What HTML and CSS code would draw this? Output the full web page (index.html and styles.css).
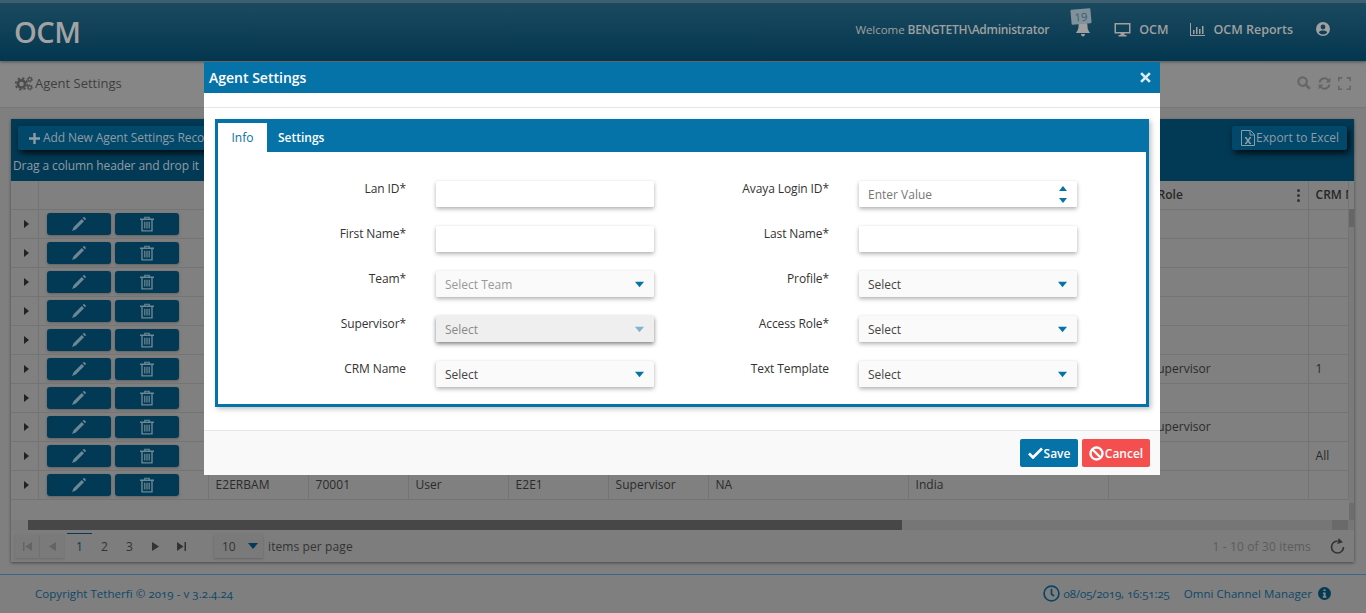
FILE: index.html
```html
<!DOCTYPE html>
<html lang="en">

<head>
  <meta charset="UTF-8">
  <title>OCM - Agent Settings</title>
  <link rel="stylesheet" href="styles.css">
</head>

<body>
  <svg class="sprite" aria-hidden="true">
    <symbol id="i-pencil" viewBox="0 0 16 16">
      <path d="M10.8 3 13 5.2 4.800 13.400 1 15 2.600 11.200ZM11.700 2.100 13 .8 15.200 3 13.900 4.300Z" fill="currentColor" />
    </symbol>
    <symbol id="i-trash" viewBox="0 0 16 16">
      <path d="M5.2 2.600V.8h5.600v1.800H15v1.500h-1.300V15.600H2.300V4.100H1V2.600ZM6.500 2.600h3V1.800h-3ZM3.700 4.100v10.100h8.600V4.100ZM5.200 5.800h1.200v6.800H5.200ZM7.400 5.800h1.200v6.800H7.400ZM9.600 5.800h1.200v6.800H9.600Z" fill-rule="evenodd" fill="currentColor" />
    </symbol>
    <symbol id="i-caret" viewBox="0 0 10 10">
      <path d="M0 2h10L5 8Z" fill="currentColor" />
    </symbol>
  </svg>

  <div id="app">
    <div id="site-header">
      <div class="logo">OCM</div>
      <div class="header-links">
        <span class="welcome">Welcome <b>BENGTETH\Administrator</b></span>
        <span class="bell">
          <svg width="14" height="16" viewBox="0 0 14 16"><path d="M7 0C4 0 2.500 2 2.500 5c0 4-1.500 5-2.500 7h14c-1-2-2.500-3-2.500-7C11.500 2 10 0 7 0ZM5 13h4c0 1.500-1 2.500-2 2.500S5 14.500 5 13Z" fill="#a0a0a0" /></svg>
          <span class="bell-count">19</span>
        </span>
        <span class="header-link">
          <svg width="17" height="15" viewBox="0 0 16 15"><path d="M0 1h16v10.500H10V13h2v1.500H4V13h2v-1.500H0ZM1.500 2.500V10h13V2.500Z" fill-rule="evenodd" fill="#a0a0a0" /></svg>
          OCM
        </span>
        <span class="header-link">
          <svg width="15" height="13" viewBox="0 0 15 13"><path d="M0 0h1v12h14v1H0ZM3 7h1.500v4H3ZM6 4h1.500v7H6ZM9 6h1.500v5H9ZM12 3h1.500v8H12Z" fill="#a0a0a0" /></svg>
          OCM Reports
        </span>
        <svg class="user-icon" width="14" height="14" viewBox="0 0 14 14"><path d="M7 0a7 7 0 1 0 0 14A7 7 0 0 0 7 0ZM7 2.600a2.400 2.400 0 1 1 0 4.800 2.400 2.400 0 0 1 0-4.800ZM2.800 10.600C3.400 9.200 4.800 8.600 7 8.600s3.600.6 4.200 2c-1 1.200-2.500 2-4.200 2s-3.200-.8-4.200-2Z" fill-rule="evenodd" fill="#a0a0a0" /></svg>
      </div>
    </div>

    <div id="page-title">
      <div class="page-name">
        <svg width="18" height="15" viewBox="0 0 18 15">
          <circle cx="6.500" cy="8" r="3.600" fill="none" stroke="#4d4d4d" stroke-width="2.600" />
          <circle cx="6.500" cy="8" r="5.800" fill="none" stroke="#4d4d4d" stroke-width="1.800" stroke-dasharray="2.300 2.250" />
          <circle cx="14.800" cy="3.400" r="1.700" fill="none" stroke="#4d4d4d" stroke-width="1.300" />
          <circle cx="14.800" cy="3.400" r="2.700" fill="none" stroke="#4d4d4d" stroke-width="1" stroke-dasharray="1.200 1.630" />
          <circle cx="14.800" cy="11.400" r="1.700" fill="none" stroke="#4d4d4d" stroke-width="1.300" />
          <circle cx="14.800" cy="11.400" r="2.700" fill="none" stroke="#4d4d4d" stroke-width="1" stroke-dasharray="1.200 1.630" />
        </svg>
        Agent Settings
      </div>
      <div class="page-tools">
        <svg width="14" height="14" viewBox="0 0 13 13"><circle cx="5.200" cy="5.200" r="3.900" fill="none" stroke="#666" stroke-width="2" /><path d="M8 8l4 4" stroke="#666" stroke-width="2.400" /></svg>
        <svg width="15" height="15" viewBox="0 0 14 14"><path d="M1.500 6a5.500 5.500 0 0 1 9.500-3l1.500-1.500V6H8l1.700-1.700A3.700 3.700 0 0 0 3.400 6ZM12.500 8A5.500 5.500 0 0 1 3 11l-1.500 1.500V8H6L4.300 9.700A3.700 3.700 0 0 0 10.600 8Z" fill="#666" /></svg>
        <svg width="13" height="13" viewBox="0 0 12 12"><path d="M0 4V0h4v1.500H1.500V4ZM8 0h4v4h-1.500V1.500H8ZM12 8v4H8v-1.500h2.500V8ZM4 12H0V8h1.500v2.500H4Z" fill="#666" /></svg>
      </div>
    </div>

    <div id="agent-grid">
      <div class="grid-toolbar">
        <div class="toolbar-row">
          <button class="tool-btn add-btn">
            <svg width="11" height="11" viewBox="0 0 11 11"><path d="M4.300 0h2.400v4.300H11v2.400H6.700V11H4.300V6.700H0V4.300h4.300Z" fill="#8f9ca3" /></svg>
            Add New Agent Settings Reco
          </button>
          <button class="tool-btn">
            <svg width="14" height="16" viewBox="0 0 14 16"><path d="M.5.5h9l4 4v11H.5ZM9 .5V5h4.500" fill="none" stroke="#8f9ca3" /><path d="M3.500 7h2L7 9.400 8.500 7h2L8 10.800 10.500 14h-2L7 11.900 5.500 14h-2L6 10.800Z" fill="#8f9ca3" /></svg>
            Export to Excel
          </button>
        </div>
        <div class="group-hint">Drag a column header and drop it</div>
      </div>

      <div class="grid-body">
        <table class="agent-table">
          <colgroup>
            <col class="col-expand">
            <col class="col-actions">
            <col class="col-md">
            <col class="col-md">
            <col class="col-md">
            <col class="col-md">
            <col class="col-md">
            <col class="col-lg">
            <col class="col-lg">
            <col class="col-lg">
            <col class="col-crm">
          </colgroup>
          <thead>
            <tr>
              <th></th>
              <th></th>
              <th></th>
              <th></th>
              <th></th>
              <th></th>
              <th></th>
              <th></th>
              <th></th>
              <th class="th-role">Access Role<span class="col-menu"><i></i><i></i><i></i></span></th>
              <th>CRM Name</th>
            </tr>
          </thead>
          <tbody>
            <tr><td class="arrow-cell"><span class="arrow"></span></td><td><div class="row-btns"><button class="row-btn"><svg><use href="#i-pencil" /></svg></button><button class="row-btn"><svg><use href="#i-trash" /></svg></button></div></td><td colspan="7"></td><td></td><td></td></tr>
            <tr><td class="arrow-cell"><span class="arrow"></span></td><td><div class="row-btns"><button class="row-btn"><svg><use href="#i-pencil" /></svg></button><button class="row-btn"><svg><use href="#i-trash" /></svg></button></div></td><td colspan="7"></td><td></td><td></td></tr>
            <tr><td class="arrow-cell"><span class="arrow"></span></td><td><div class="row-btns"><button class="row-btn"><svg><use href="#i-pencil" /></svg></button><button class="row-btn"><svg><use href="#i-trash" /></svg></button></div></td><td colspan="7"></td><td></td><td></td></tr>
            <tr><td class="arrow-cell"><span class="arrow"></span></td><td><div class="row-btns"><button class="row-btn"><svg><use href="#i-pencil" /></svg></button><button class="row-btn"><svg><use href="#i-trash" /></svg></button></div></td><td colspan="7"></td><td></td><td></td></tr>
            <tr><td class="arrow-cell"><span class="arrow"></span></td><td><div class="row-btns"><button class="row-btn"><svg><use href="#i-pencil" /></svg></button><button class="row-btn"><svg><use href="#i-trash" /></svg></button></div></td><td colspan="7"></td><td></td><td></td></tr>
            <tr><td class="arrow-cell"><span class="arrow"></span></td><td><div class="row-btns"><button class="row-btn"><svg><use href="#i-pencil" /></svg></button><button class="row-btn"><svg><use href="#i-trash" /></svg></button></div></td><td colspan="7"></td><td class="td-role">Supervisor</td><td>1</td></tr>
            <tr><td class="arrow-cell"><span class="arrow"></span></td><td><div class="row-btns"><button class="row-btn"><svg><use href="#i-pencil" /></svg></button><button class="row-btn"><svg><use href="#i-trash" /></svg></button></div></td><td colspan="7"></td><td></td><td></td></tr>
            <tr><td class="arrow-cell"><span class="arrow"></span></td><td><div class="row-btns"><button class="row-btn"><svg><use href="#i-pencil" /></svg></button><button class="row-btn"><svg><use href="#i-trash" /></svg></button></div></td><td colspan="7"></td><td class="td-role">Supervisor</td><td></td></tr>
            <tr><td class="arrow-cell"><span class="arrow"></span></td><td><div class="row-btns"><button class="row-btn"><svg><use href="#i-pencil" /></svg></button><button class="row-btn"><svg><use href="#i-trash" /></svg></button></div></td><td colspan="7"></td><td></td><td>All</td></tr>
            <tr><td class="arrow-cell"><span class="arrow"></span></td><td><div class="row-btns"><button class="row-btn"><svg><use href="#i-pencil" /></svg></button><button class="row-btn"><svg><use href="#i-trash" /></svg></button></div></td><td>E2ERBAM</td><td>70001</td><td>User</td><td>E2E1</td><td>Supervisor</td><td>NA</td><td>India</td><td></td><td></td></tr>
          </tbody>
        </table>
        <div class="v-scroll">
          <span class="v-thumb"></span>
          <span class="v-end"></span>
        </div>
      </div>

      <div class="h-scroll">
        <span class="h-start"></span>
        <span class="h-thumb"></span>
        <span class="h-rest"></span>
        <span class="h-end"></span>
      </div>

      <div class="pager">
        <span class="pager-btn faded"><svg width="9" height="9" viewBox="0 0 9 9"><path d="M0 0h1.500v9H0ZM9 0v9L2.500 4.500Z" fill="currentColor" /></svg></span>
        <span class="pager-btn faded"><svg width="7" height="9" viewBox="0 0 7 9"><path d="M7 0v9L0 4.500Z" fill="currentColor" /></svg></span>
        <span class="page-num current">1</span>
        <span class="page-num">2</span>
        <span class="page-num">3</span>
        <span class="pager-arrow"><svg width="7" height="9" viewBox="0 0 7 9"><path d="M0 0v9l7-4.500Z" fill="currentColor" /></svg></span>
        <span class="pager-arrow"><svg width="9" height="9" viewBox="0 0 9 9"><path d="M0 0v9l6.500-4.500ZM7.500 0H9v9H7.500Z" fill="currentColor" /></svg></span>
        <span class="page-size">10 <svg width="10" height="10"><use href="#i-caret" /></svg></span>
        <span class="page-size-label">items per page</span>
        <span class="page-info">1 - 10 of 30 items</span>
        <svg class="page-refresh" width="15" height="16" viewBox="0 0 15 16"><path d="M7.500 3a6 6 0 1 0 6 6" fill="none" stroke="#333" stroke-width="1.700" /><path d="M8 0l5 3.200L8 6Z" fill="#333" transform="rotate(12 8 3)" /></svg>
      </div>
    </div>

    <div id="site-footer">
      <span>Copyright Tetherfi © 2019 - v 3.2.4.24</span>
      <div class="footer-right">
        <svg width="17" height="17" viewBox="0 0 16 16"><circle cx="8" cy="8" r="7" fill="none" stroke="#0a4565" stroke-width="1.600" /><path d="M8 3.500v5l2.500 2" fill="none" stroke="#0a4565" stroke-width="1.600" /></svg>
        <span class="footer-time">08/05/2019, 16:51:25</span>
        <span class="footer-app">Omni Channel Manager</span>
        <svg width="13" height="13" viewBox="0 0 12 12"><circle cx="6" cy="6" r="6" fill="#033a56" /><path d="M5 2.200h2v1.600H5ZM4.600 5H7v3.600h.8V10H4.400V8.600h.8V6.400h-.6Z" fill="#8a8a8a" /></svg>
      </div>
    </div>
  </div>

  <div id="settings-dialog">
    <div class="dialog-title">
      <span>Agent Settings</span>
      <svg width="11" height="11" viewBox="0 0 10 10"><path d="M1 1l8 8M9 1L1 9" stroke="#dcebf3" stroke-width="2.400" /></svg>
    </div>
    <div class="dialog-gap"></div>
    <div class="dialog-body">
      <div class="tab-box">
        <div class="tab-strip">
          <span class="tab active">Info</span>
          <span class="tab">Settings</span>
        </div>
        <div class="form-grid">
          <label>Lan ID*</label>
          <div class="field"></div>
          <label>Avaya Login ID*</label>
          <div class="field placeholder">Enter Value
            <span class="spin"><i class="up"></i><i class="down"></i></span>
          </div>

          <label>First Name*</label>
          <div class="field"></div>
          <label>Last Name*</label>
          <div class="field"></div>

          <label>Team*</label>
          <div class="field select muted">Select Team <svg><use href="#i-caret" /></svg></div>
          <label>Profile*</label>
          <div class="field select">Select <svg><use href="#i-caret" /></svg></div>

          <label>Supervisor*</label>
          <div class="field select disabled">Select <svg><use href="#i-caret" /></svg></div>
          <label>Access Role*</label>
          <div class="field select">Select <svg><use href="#i-caret" /></svg></div>

          <label>CRM Name</label>
          <div class="field select">Select <svg><use href="#i-caret" /></svg></div>
          <label>Text Template</label>
          <div class="field select">Select <svg><use href="#i-caret" /></svg></div>
        </div>
      </div>
    </div>
    <div class="dialog-footer">
      <button class="btn-save">
        <svg width="15" height="12" viewBox="0 0 15 12"><path d="M1 6.500l4 4 9-9" fill="none" stroke="#fff" stroke-width="2.600" /></svg>
        Save
      </button>
      <button class="btn-cancel">
        <svg width="15" height="15" viewBox="0 0 15 15"><circle cx="7.500" cy="7.500" r="6" fill="none" stroke="#fff" stroke-width="2.400" /><path d="M3.500 3.500l8 8" stroke="#fff" stroke-width="2.400" /></svg>
        Cancel
      </button>
    </div>
  </div>
</body>

</html>
```

FILE: styles.css
```css
* {
  box-sizing: border-box;
}

html,
body {
  margin: 0;
  height: 613px;
  overflow: hidden;
}

body {
  font-family: "Open Sans", "Noto Sans", sans-serif;
  font-size: 12px;
  background-color: #7f7f7f;
  color: #2b2b2b;
}

button {
  font-family: inherit;
  border: 0;
  cursor: pointer;
}

.sprite {
  display: none;
}

#app {
  display: flex;
  flex-direction: column;
  height: 613px;
}

/* header (everything behind the dialog is painted dimmed) */
#site-header {
  height: 61px;
  flex: none;
  border-top: 3px solid #3e5f70;
  background: linear-gradient(#1b4a5f, #03364f);
  box-shadow: 0 1px 3px rgb(0 0 0 / 40%);
  display: flex;
  justify-content: space-between;
  align-items: center;
  padding: 0 36px 0 14px;
  color: #a0a0a0;
  position: relative;
}

.logo {
  font-size: 29px;
  font-weight: 600;
  letter-spacing: -0.5px;
  color: #a3a3a3;
  margin-top: -2px;
}

.header-links {
  display: flex;
  align-items: center;
  font-size: 12.5px;
  font-weight: 600;
  margin-top: -6px;
}

.welcome {
  font-weight: 400;
  font-size: 11.5px;
  letter-spacing: -0.05px;
}

.welcome b {
  font-size: 12px;
  font-weight: 600;
  letter-spacing: -0.28px;
}

.bell {
  position: relative;
  margin: 0 2px 0 27px;
  width: 14px;
  height: 16px;
  display: block;
}

.bell-count {
  position: absolute;
  left: -5px;
  top: -12px;
  width: 20px;
  height: 15px;
  background-color: #7f929b;
  color: #3c5a6c;
  font-size: 11px;
  font-weight: 400;
  line-height: 15px;
  text-align: center;
  border-radius: 1px;
  transform: rotate(-5deg);
}

.header-link {
  display: flex;
  align-items: center;
  gap: 8px;
  margin-left: 22px;
}

.user-icon {
  margin-left: 23px;
}

#page-title {
  height: 47px;
  flex: none;
  background-color: #868686;
  border-bottom: 1px solid #777;
  display: flex;
  justify-content: space-between;
  align-items: center;
  padding: 0 15px 2px;
}

.page-name {
  display: flex;
  align-items: center;
  gap: 2px;
  font-size: 13px;
  color: #3f3f3f;
}

.page-tools {
  display: flex;
  align-items: center;
  gap: 6px;
}

/* grid */
#agent-grid {
  margin: 11px 12px 0 11px;
  height: 443px;
  flex: none;
  display: flex;
  flex-direction: column;
  box-shadow: 0 1px 3px rgb(0 0 0 / 45%);
}

.grid-toolbar {
  height: 62px;
  flex: none;
  background-color: #023a55;
  padding: 7px 7px 0;
  color: #8f9ca3;
}

.toolbar-row {
  display: flex;
  justify-content: space-between;
}

.tool-btn {
  height: 24px;
  display: flex;
  align-items: center;
  gap: 1px;
  padding: 0 8px 2px 9px;
  background-color: #02486b;
  color: #8f9ca3;
  font-size: 12px;
  border-radius: 2px;
  box-shadow: 2px 3px 6px rgb(0 0 0 / 85%);
}

.add-btn {
  gap: 3px;
  padding-left: 11px;
  padding-right: 30px;
  letter-spacing: -0.1px;
}

.tool-btn svg {
  margin-bottom: -2px;
}

.group-hint {
  margin: 8px 0 0 -5px;
  font-size: 12px;
  letter-spacing: -0.1px;
  line-height: 16px;
}

.grid-body {
  height: 339px;
  flex: none;
  overflow: hidden;
  display: flex;
  background-color: #808080;
}

.agent-table {
  table-layout: fixed;
  width: 1337px;
  flex: none;
  border-collapse: collapse;
  align-self: flex-start;
}

.col-expand {
  width: 27px;
}

.col-actions {
  width: 170px;
}

.col-md {
  width: 100px;
}

.col-lg {
  width: 200px;
}

.col-crm {
  width: 40px;
}

.agent-table th,
.agent-table td {
  height: 29px;
  padding: 0 7px;
  border: 1px solid #747474;
  border-top: 0;
  text-align: left;
  white-space: nowrap;
  overflow: hidden;
  font-size: 12px;
  letter-spacing: 0.05px;
}

.agent-table th {
  height: 28px;
  font-weight: 600;
  color: #262626;
}

.agent-table th:first-child,
.agent-table td:first-child {
  border-left: 0;
}

.th-role {
  position: relative;
}

.td-role {
  padding-left: 42px !important;
}

.col-menu {
  position: absolute;
  right: 8px;
  top: 8px;
  display: flex;
  flex-direction: column;
  gap: 2px;
}

.col-menu i {
  width: 3px;
  height: 3px;
  border-radius: 50%;
  background-color: #333;
}

.arrow-cell {
  padding: 0 0 0 13px !important;
}

.arrow {
  display: block;
  width: 0;
  height: 0;
  border-left: 5px solid #222;
  border-top: 4px solid transparent;
  border-bottom: 4px solid transparent;
}

.agent-table td:nth-child(2) {
  padding: 0 0 0 8px;
}

.row-btns {
  display: flex;
  gap: 4px;
}

.row-btn {
  width: 64px;
  height: 22px;
  padding: 0;
  background-color: #023a55;
  color: #6e8794;
  border-radius: 3px;
  box-shadow: 0 1px 3px rgb(0 0 0 / 25%);
  display: flex;
  align-items: center;
  justify-content: center;
}

.row-btn svg {
  width: 16px;
  height: 16px;
}

.v-scroll {
  width: 6px;
  flex: none;
  background-color: #7a7a7a;
  display: flex;
  flex-direction: column;
  justify-content: space-between;
  margin-top: 28px;
}

.v-thumb {
  height: 18px;
  background-color: #666;
}

.v-end {
  height: 17px;
  background-color: #6e6e6e;
}

.h-scroll {
  height: 10px;
  flex: none;
  display: flex;
  background-color: #767676;
}

.h-start {
  width: 17px;
  background-color: #7c7c7c;
}

.h-thumb {
  width: 874px;
  background-color: #474747;
}

.h-rest {
  flex: 1;
}

.h-end {
  width: 16px;
  margin-right: 6px;
  background-color: #6a6a6a;
}

.pager {
  height: 32px;
  flex: none;
  background-color: #7d7d7d;
  display: flex;
  align-items: center;
  padding: 0 9px 0 4px;
  color: #333;
  position: relative;
}

.pager-btn {
  width: 24px;
  height: 24px;
  margin-right: 1px;
  display: flex;
  align-items: center;
  justify-content: center;
  background-color: #7a7a7a;
  box-shadow: 0 1px 2px rgb(0 0 0 / 15%);
}

.faded {
  color: #646464;
}

.page-num {
  width: 25px;
  text-align: center;
  color: #333;
}

.page-num.current {
  color: #033a56;
  border-top: 1px solid #033a56;
  height: 26px;
  line-height: 26px;
  margin-left: 2px;
}

.pager-arrow {
  width: 26px;
  display: flex;
  justify-content: center;
}

.page-size {
  width: 49px;
  height: 24px;
  margin-left: 20px;
  padding: 0 5px 0 8px;
  display: flex;
  justify-content: space-between;
  align-items: center;
  background-color: #7a7a7a;
  box-shadow: 0 1px 2px rgb(0 0 0 / 20%);
}

.page-size svg {
  color: #033a56;
}

.page-size-label {
  margin-left: 5px;
  letter-spacing: 0.1px;
}

.page-info {
  margin-left: auto;
  color: #5c5c5c;
  letter-spacing: 0.15px;
}

.page-refresh {
  margin-left: 19px;
}

#site-footer {
  margin-top: 12px;
  flex: 1;
  border-top: 1px solid #366a85;
  display: flex;
  justify-content: space-between;
  align-items: center;
  padding: 0 35px 2px;
  color: #0d4767;
  font-variant-numeric: oldstyle-nums;
  font-size: 11.5px;
  letter-spacing: 0.05px;
}

.footer-right {
  display: flex;
  align-items: center;
  gap: 4px;
}

.footer-time {
  letter-spacing: -0.1px;
}

.footer-app {
  margin: 0 2px 0 10px;
}

/* dialog */
#settings-dialog {
  position: absolute;
  left: 204px;
  top: 62px;
  width: 956px;
  height: 413px;
  background-color: white;
  display: flex;
  flex-direction: column;
}

.dialog-title {
  height: 31px;
  flex: none;
  background-color: #0572a8;
  color: white;
  font-size: 14px;
  font-weight: 600;
  display: flex;
  justify-content: space-between;
  align-items: center;
  padding: 0 9px 0 5px;
}

.dialog-gap {
  height: 15px;
  flex: none;
  border-bottom: 1px solid #e6e6e6;
}

.dialog-body {
  flex: 1;
  padding: 11px 11px 0;
}

.tab-box {
  height: 288px;
  border: 3px solid #0572a8;
  box-shadow: 2px 2px 5px rgb(0 0 0 / 25%);
}

.tab-strip {
  height: 30px;
  background-color: #0572a8;
  padding-top: 1px;
  display: flex;
}

.tab {
  width: 49px;
  line-height: 29px;
  text-align: center;
  font-size: 12px;
  font-weight: 600;
  color: white;
}

.tab.active {
  background-color: white;
  color: #0572a8;
  font-weight: 400;
}

.tab + .tab {
  width: auto;
  margin-left: 11px;
}

.form-grid {
  display: grid;
  grid-template-columns: 218px 218px 205px 218px;
  grid-auto-rows: 26px;
  row-gap: 19px;
  padding-top: 29px;
}

.form-grid label {
  text-align: right;
  padding-right: 30px;
  font-size: 12px;
  letter-spacing: -0.1px;
  line-height: 14px;
  color: #333;
  padding-top: 1px;
}

.field {
  position: relative;
  height: 26px;
  background-color: white;
  box-shadow: 0 2px 4px rgb(0 0 0 / 30%), 0 0 1px rgb(0 0 0 / 15%);
  border-radius: 1px;
  display: flex;
  align-items: center;
  justify-content: space-between;
  padding: 0 10px 0 9px;
  font-size: 12px;
  color: #444;
}

.field.select {
  background-color: #fafafa;
}

.field svg {
  width: 9px;
  height: 9px;
  color: #0572a8;
}

.placeholder {
  color: #777;
}

.field.muted {
  color: #999;
}

.field.disabled {
  background-color: #efefef;
  color: #888;
  box-shadow: 0 2px 4px rgb(0 0 0 / 50%);
}

.field.disabled svg {
  color: #7fb4cf;
}

.spin {
  display: flex;
  flex-direction: column;
  gap: 7px;
}

.spin i {
  width: 0;
  height: 0;
  border-left: 4px solid transparent;
  border-right: 4px solid transparent;
}

.spin .up {
  border-bottom: 5px solid #0572a8;
}

.spin .down {
  border-top: 5px solid #0572a8;
}

.dialog-footer {
  height: 45px;
  flex: none;
  background-color: #f9f9f9;
  border-top: 1px solid #e6e6e6;
  display: flex;
  justify-content: flex-end;
  align-items: flex-start;
  gap: 4px;
  padding: 8px 10px 0 0;
}

.dialog-footer button {
  height: 28px;
  display: flex;
  align-items: center;
  justify-content: center;
  gap: 1px;
  color: white;
  font-size: 12px;
  font-weight: 600;
  border-radius: 2px;
}

.btn-save {
  width: 58px;
  background-color: #0572a8;
}

.btn-cancel {
  width: 68px;
  background-color: #f44f4f;
}
```
